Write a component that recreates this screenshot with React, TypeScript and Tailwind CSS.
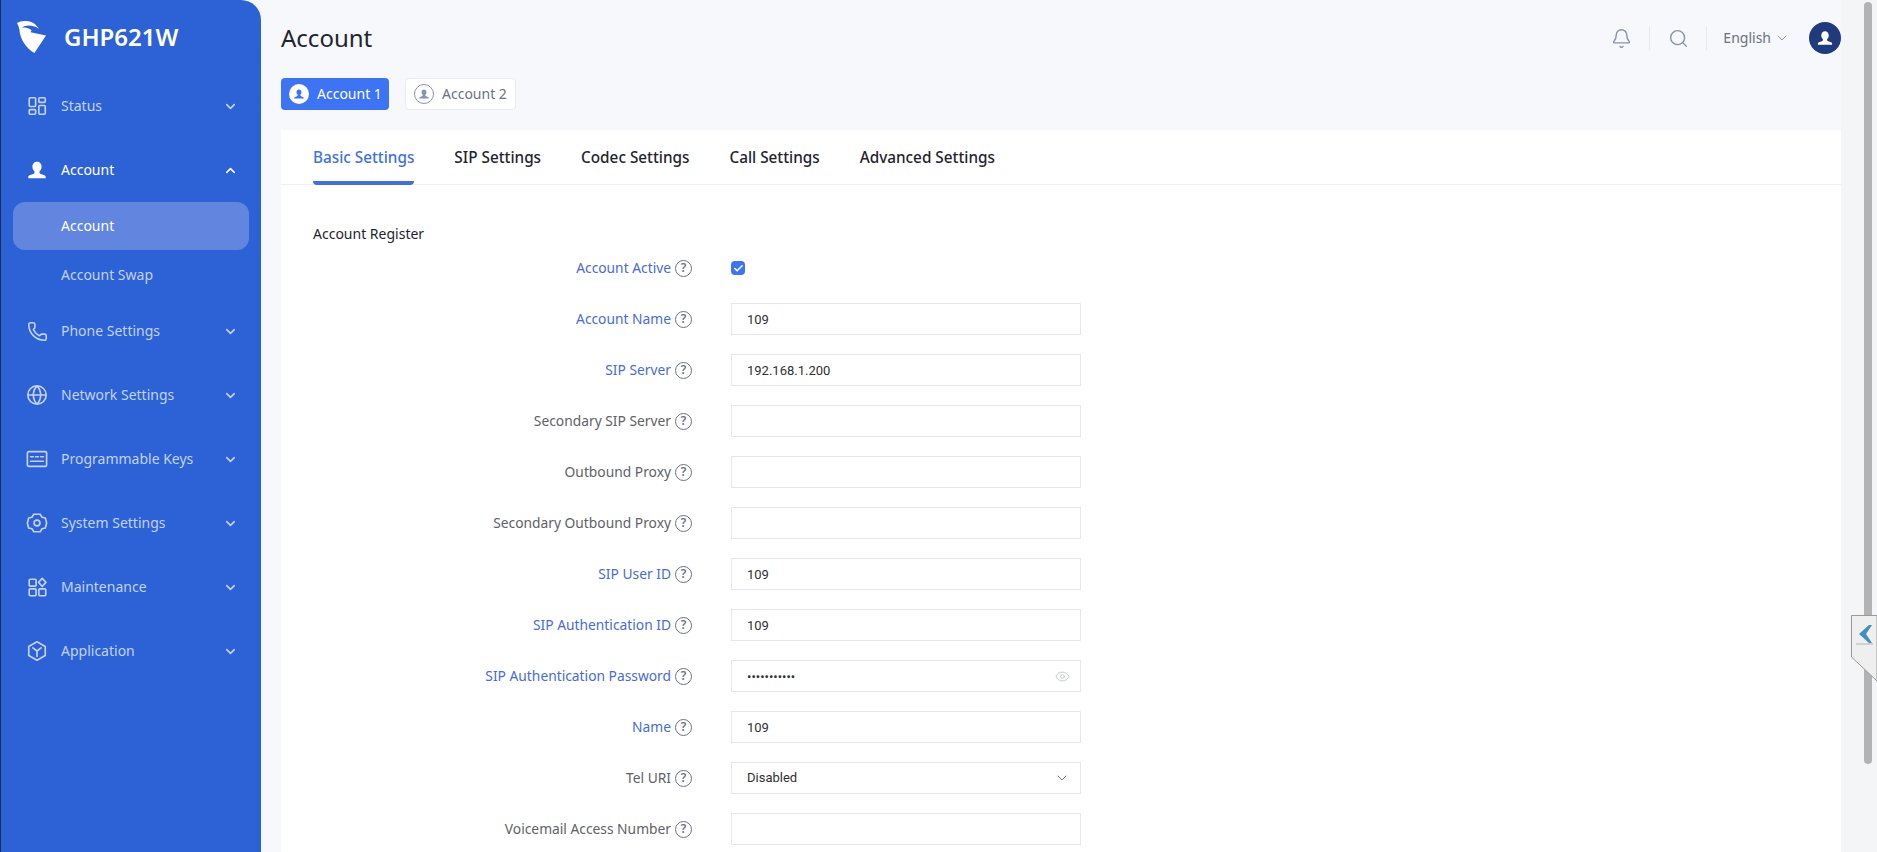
import { ReactNode } from "react";
import { Bell, Check, ChevronDown, ChevronUp, Eye, Globe, Phone, Search } from "lucide-react";

const personPath =
  "M12 3c-3 0-5 2.3-5 5.5 0 2.2 1 4 2.3 5v1.2c0 .8-.6 1.4-1.5 1.7L4 17.8c-1 .4-1.5 1-1.5 2V21h19v-1.2c0-1-.5-1.6-1.5-2l-3.8-1.4c-.9-.3-1.5-.9-1.5-1.7v-1.2c1.3-1 2.3-2.8 2.3-5C17 5.3 15 3 12 3z";

function Person({ className }: { className?: string }) {
  return (
    <svg viewBox="0 0 24 24" fill="currentColor" className={className}>
      <path d={personPath} />
    </svg>
  );
}

function Outline({ children }: { children: ReactNode }) {
  return (
    <svg viewBox="0 0 24 24" fill="none" stroke="currentColor" strokeWidth="1.8" strokeLinejoin="round" strokeLinecap="round" className="w-[22px] h-[22px]">
      {children}
    </svg>
  );
}

const StatusIcon = () => (
  <Outline>
    <rect x="3.5" y="3" width="7" height="9.5" rx="1" />
    <rect x="14" y="3" width="7" height="5" rx="1" />
    <rect x="3.5" y="16" width="7" height="5" rx="1" />
    <rect x="14" y="11.5" width="7" height="9.5" rx="1" />
  </Outline>
);

const KeysIcon = () => (
  <Outline>
    <rect x="1.5" y="4" width="21" height="16" rx="1.5" />
    <path d="M5 9.5h3M10.5 9.5h3M16 9.5h3M5 14.5h14" />
  </Outline>
);

const SystemIcon = () => (
  <Outline>
    <path d="M8.5 2.5h7l2 3.2 3.6.8 1.4 5.5-1.4 5.5-3.6.8-2 3.2h-7l-2-3.2-3.6-.8L1.5 12l1.4-5.5 3.6-.8z" />
    <circle cx="12" cy="12" r="3.2" />
  </Outline>
);

const MaintenanceIcon = () => (
  <Outline>
    <rect x="3.5" y="3.5" width="7.5" height="7.5" rx="1" />
    <rect x="3.5" y="14" width="7.5" height="7.5" rx="1" />
    <rect x="14" y="14" width="7.5" height="7.5" rx="1" />
    <path d="M17.7 2.5l4 4.5-4 4.5-4-4.5z" />
  </Outline>
);

const ApplicationIcon = () => (
  <Outline>
    <path d="M12 2l9 5v10l-9 5-9-5V7z" />
    <path d="M7.5 8.5L12 12l4.5-3.5M12 12v6" />
  </Outline>
);

const menu: { label: string; icon: ReactNode }[] = [
  { label: "Phone Settings", icon: <Phone className="w-[21px] h-[21px]" strokeWidth={1.8} /> },
  { label: "Network Settings", icon: <Globe className="w-[22px] h-[22px]" strokeWidth={1.8} /> },
  { label: "Programmable Keys", icon: <KeysIcon /> },
  { label: "System Settings", icon: <SystemIcon /> },
  { label: "Maintenance", icon: <MaintenanceIcon /> },
  { label: "Application", icon: <ApplicationIcon /> },
];

function MenuItem({ label, icon, open }: { label: string; icon: ReactNode; open?: boolean }) {
  return (
    <div className={`h-16 flex items-center pl-[25px] pr-[23px] ${open ? "text-white" : "text-[#c3d2f5]"}`}>
      <span className="w-[22px] flex justify-center">{icon}</span>
      <span className="ml-[13px] flex-1 text-sm">{label}</span>
      {open ? <ChevronUp size={15} strokeWidth={2.5} /> : <ChevronDown size={15} strokeWidth={2.5} />}
    </div>
  );
}

function Sidebar() {
  return (
    <aside className="w-[261px] shrink-0 bg-[#2d62d6] rounded-tr-[20px] border-l border-[#1b2f5e]">
      <div className="h-[74px] flex items-center pl-4">
        <svg viewBox="0 0 30 34" fill="white" className="w-[29px] h-[33px]">
          <path d="M0 2C5-1 14-1 19 3.500l4 4.500C16 4 9 3.500 5 7c3-1 6.500-.5 10 2.500l-1 2 16 3.500-12 18C9 28 3 18 2.500 9 2 6 1 4 0 2z" />
        </svg>
        <span className="ml-[18px] text-white text-2xl font-semibold">GHP621W</span>
      </div>
      <MenuItem label="Status" icon={<StatusIcon />} />
      <MenuItem label="Account" icon={<Person className="w-[22px] h-[22px]" />} open />
      <div className="mx-3 h-12 rounded-xl bg-[#6286df] flex items-center pl-12 text-sm text-white">Account</div>
      <div className="h-[49px] flex items-center pl-[60px] text-sm text-[#c3d2f5]">Account Swap</div>
      {menu.map((m) => (
        <MenuItem key={m.label} label={m.label} icon={m.icon} />
      ))}
    </aside>
  );
}

function Topbar() {
  return (
    <div className="h-[76px] flex items-center">
      <h1 className="text-2xl text-[#1f2430] flex-1">Account</h1>
      <Bell size={21} className="text-[#8a94a6]" strokeWidth={1.6} />
      <div className="w-px h-6 bg-[#e6e8ec] mr-[18px] ml-[17px]" />
      <Search size={21} className="text-[#8a94a6] mr-[17px]" strokeWidth={1.6} />
      <div className="w-px h-6 bg-[#e6e8ec] mr-4" />
      <span className="text-sm text-[#6b7280]">English</span>
      <ChevronDown size={16} className="text-[#8a94a6] ml-[3px]" strokeWidth={1.4} />
      <div className="w-8 h-8 rounded-full bg-[#1f3a7d] ml-[19px] flex items-center justify-center">
        <Person className="w-[18px] h-[18px] text-white" />
      </div>
    </div>
  );
}

function AccountTabs() {
  return (
    <div className="flex gap-4 mt-0.5 h-8">
      <div className="w-[108px] rounded bg-[#3d73f5] flex items-center pl-2 text-sm text-white">
        <span className="w-5 h-5 rounded-full bg-white flex items-center justify-center">
          <Person className="w-3 h-3 text-[#3d73f5]" />
        </span>
        <span className="ml-[8px]">Account 1</span>
      </div>
      <div className="w-[111px] rounded border border-[#e9ebef] bg-white flex items-center pl-2 text-sm text-[#6b7280]">
        <span className="w-5 h-5 rounded-full border border-[#8a94a6] flex items-center justify-center">
          <Person className="w-3 h-3 text-[#8a94a6]" />
        </span>
        <span className="ml-[8px]">Account 2</span>
      </div>
    </div>
  );
}

function SettingTabs() {
  const tabs = ["SIP Settings", "Codec Settings", "Call Settings", "Advanced Settings"];
  return (
    <div className="h-[55px] flex gap-10 pl-8 border-b border-[#eef0f3] text-[15.3px] font-medium text-[#1f2430]">
      <div className="h-[55px] flex items-center border-b-4 border-[#3f6fe8] text-[#3f6fe8] rounded-b-sm pt-1">Basic Settings</div>
      {tabs.map((t) => (
        <div key={t} className="flex items-center pt-px">{t}</div>
      ))}
    </div>
  );
}

type Row = { label: string; active?: boolean; value?: string; kind?: "check" | "password" | "select" };

const rows: Row[] = [
  { label: "Account Active", active: true, kind: "check" },
  { label: "Account Name", active: true, value: "109" },
  { label: "SIP Server", active: true, value: "192.168.1.200" },
  { label: "Secondary SIP Server" },
  { label: "Outbound Proxy" },
  { label: "Secondary Outbound Proxy" },
  { label: "SIP User ID", active: true, value: "109" },
  { label: "SIP Authentication ID", active: true, value: "109" },
  { label: "SIP Authentication Password", active: true, value: "12345678901", kind: "password" },
  { label: "Name", active: true, value: "109" },
  { label: "Tel URI", value: "Disabled", kind: "select" },
  { label: "Voicemail Access Number" },
];

function HelpIcon() {
  return (
    <span className="ml-1 w-[17px] h-[17px] rounded-full border border-[#6b7280] flex items-center justify-center text-[12px] leading-none text-[#6b7280] font-semibold">?</span>
  );
}

function FormRow({ row }: { row: Row }) {
  const boxClass = "relative w-[350px] h-8 border border-[#e4e7ed] bg-white flex items-center";
  const textClass = "w-full h-full pl-[15px] pr-8 text-[13px] text-[#303133] font-['Roboto',sans-serif] outline-none";
  return (
    <div className="flex items-center h-8 mb-[19px]">
      <div className={`w-[411px] flex items-center justify-end text-[13.8px] ${row.active ? "text-[#4a6bd6]" : "text-[#606266]"}`}>
        {row.label}
        <HelpIcon />
      </div>
      <div className="ml-[39px]">
        {row.kind === "check" ? (
          <div className="w-[14px] h-[14px] rounded-sm bg-[#3d73f5] flex items-center justify-center">
            <Check size={11} strokeWidth={3.5} className="text-white" />
          </div>
        ) : row.kind === "select" ? (
          <div className={boxClass}>
            <span className="pl-[15px] flex-1 text-[13px] text-[#303133] font-['Roboto',sans-serif]">{row.value}</span>
            <ChevronDown size={16} className="text-[#606266] mr-[10px]" strokeWidth={1.3} />
          </div>
        ) : (
          <div className={boxClass}>
            <input readOnly type={row.kind === "password" ? "password" : "text"} defaultValue={row.value ?? ""} className={textClass} />
            {row.kind === "password" && <Eye size={15} className="absolute right-[10px] text-[#c0c4cc]" strokeWidth={1.5} />}
          </div>
        )}
      </div>
    </div>
  );
}

export default function App() {
  return (
    <div className="relative flex h-[852px] overflow-hidden bg-[#f6f8fb] font-['Noto_Sans',sans-serif]">
      <Sidebar />
      <main className="flex-1 min-w-0 pl-5">
        <Topbar />
        <AccountTabs />
        <section className="mt-5 h-[722px] bg-white">
          <SettingTabs />
          <p className="pl-8 mt-[39px] mb-[8px] h-[20px] leading-[20px] text-sm text-[#1f2430]">Account Register</p>
          {rows.map((r) => (
            <FormRow key={r.label} row={r} />
          ))}
        </section>
      </main>
      <div className="w-[36px] shrink-0 bg-[#f4f5f6] pt-0.5 pl-[23px]">
        <div className="w-2 h-[762px] rounded-full bg-[#b3b3b3]" />
      </div>
      {/* side tab that sits over the scrollbar */}
      <svg viewBox="0 0 26 67" className="absolute right-0 top-[615px] w-[26px] h-[67px]">
        <path d="M.5.5H26V66L.5 42z" fill="#efefef" stroke="#9a9a9a" strokeWidth="1" />
        <path d="M18 10l-10 9 10 9h3l-6-9 6-9z" fill="#3f8fc4" />
        <path d="M5 29h17" stroke="#b8b2a8" strokeWidth="1" />
      </svg>
    </div>
  );
}
